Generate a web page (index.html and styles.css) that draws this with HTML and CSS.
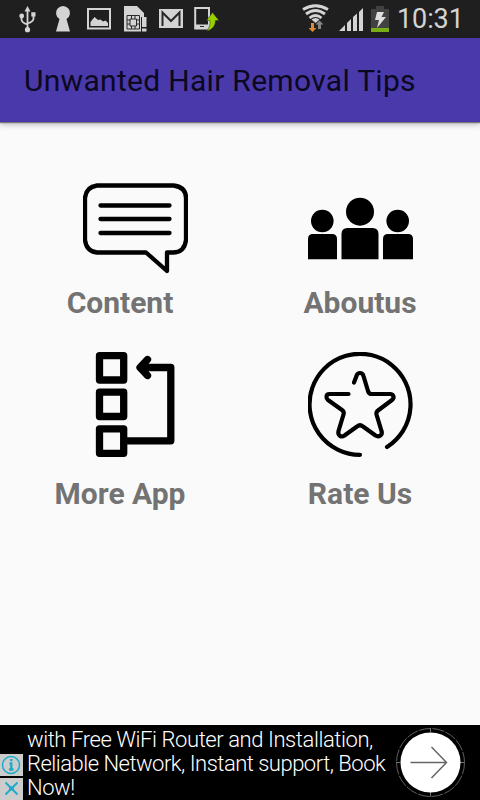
FILE: index.html
```html
<!DOCTYPE html>
<html lang="en">
<head>
<meta charset="utf-8">
<title>Unwanted Hair Removal Tips</title>
<link rel="stylesheet" href="styles.css">
</head>
<body>
<div class="screen">
  <div class="status">
    <svg class="status-left" viewBox="0 0 240 38" width="240" height="38" fill="none" stroke="#d4d4d4">
      <!-- usb -->
      <path d="M27.500 10V29M21.500 17V19.500Q21.500 22.500 27.500 24.500M33.500 15V18.500Q33.500 21.500 27.500 23.500" stroke-width="1.800"/>
      <path d="M24.500 11.500L27.500 6L30.500 11.500ZM31.300 12.200H35.500V16.500H31.300Z" fill="#d4d4d4" stroke="none"/>
      <circle cx="21.700" cy="16" r="2.400" fill="#d4d4d4" stroke="none"/><circle cx="27.500" cy="29.700" r="2.600" fill="#d4d4d4" stroke="none"/>
      <!-- keyhole -->
      <path d="M59.500 19A7 7 0 1 1 66.500 19L70 31.500H56Z" fill="#d4d4d4" stroke="none"/>
      <!-- picture -->
      <path d="M88 9H110V28.500H88Z" stroke-width="2"/>
      <path d="M90.500 26V22L94.500 17L98 20L100.500 19.500L103 21.500L105.500 20.500L108 23V26Z" fill="#d4d4d4" stroke="none"/>
      <!-- sim card -->
      <path d="M124 6H137L144 13V17H141V31.500H124Z" fill="#d4d4d4" stroke="none"/>
      <path d="M127 15.500H139.500V29H127ZM130 19H136.500V26H130ZM127 20H130M127 24H130M136 20H139M136 24H139M131.500 15V19M135 15V19M131.500 26V29M135 26V29" stroke="#282828" stroke-width="1"/>
      <path d="M142 17H146.500V27H142ZM142 28.500H146.500V31.500H142Z" fill="#d4d4d4" stroke="none"/>
      <!-- mail -->
      <path d="M159 9H183V28H159Z" fill="#d4d4d4" stroke="none"/>
      <path d="M162.500 26V12.500L171 21L179.500 12.500V26" stroke="#282828" stroke-width="2"/>
      <!-- phone with arrow -->
      <path d="M195.200 8H209V28.500H195.200Z" stroke-width="2"/>
      <path d="M195 24.500H209V29H195Z" fill="#d4d4d4" stroke="none"/><path d="M200 26.500H204" stroke="#282828"/>
      <path d="M212.500 12.500L219 20.500H215.500Q215.500 29 206.500 31Q210.500 27 210 20.500H206.500Z" fill="#98cf00" stroke="#282828" stroke-width=".5"/>
    </svg>
    <div class="status-right">
      <svg viewBox="300 0 92 38" width="92" height="38" fill="none" stroke="#d4d4d4">
        <path d="M303 9.500Q315.500 2 328 9.500M306 14Q315.500 7 325 14M309.500 18Q315.500 13 321.500 18" stroke-width="2.800"/>
        <path d="M311.500 19.500Q315.500 16.500 319.500 19.500L315.500 23Z" fill="#d4d4d4" stroke="none"/>
        <path d="M311 23H314V28H316.500L312.500 32L308.500 28H311Z" fill="#dc8b32" stroke="none"/>
        <path d="M318 29V24.500H315.500L319.500 20.500L323.500 24.500H321V29Z" fill="#858585" stroke="none"/>
        <path d="M339 31L345 25V31ZM347 23L351 19V31H347ZM353 17L357 13.500V31H353ZM359 12L363 8V31H359Z" fill="#d4d4d4" stroke="none"/>
        <path d="M371 9H376V6H384V9H389V28H371Z" fill="#414141" stroke="none"/>
        <path d="M371 28H389V32H371Z" fill="#78ad17" stroke="none"/>
        <path d="M377 12H384L381.500 17H386L377 28L379 20H375Z" fill="#dedede" stroke="none"/>
      </svg>
      <span class="clock">10:31</span>
    </div>
  </div>
  <header class="toolbar"><h1>Unwanted Hair Removal Tips</h1></header>
  <main class="menu">
    <a class="item shifted">
      <svg viewBox="83 176 105 105" width="105" height="105" fill="none" stroke="#000" stroke-width="4.300" stroke-linecap="round" stroke-linejoin="round">
        <path d="M97 185.500H173.500Q186 187 186 198V240Q184.500 252.500 173 252.500H167V271L146 252.500H97Q86.500 251.500 85 240V198Q86 187 97 185.500Z"/>
        <path d="M100.500 205.500H169.500M100.500 219H169.500M100.500 233H169.500"/>
      </svg>
      <span class="label">Content</span>
    </a>
    <a class="item">
      <svg viewBox="308 176 105 105" width="105" height="105">
        <circle cx="322.300" cy="221" r="11.300"/><circle cx="360" cy="211.700" r="14"/><circle cx="397.700" cy="221" r="11.300"/>
        <path d="M308 259.300V239Q308 234 313 234H332Q337 234 337 239V259.300ZM341.500 259.300V234Q341.500 228 347.500 228H372.500Q378.500 228 378.500 234V259.300ZM383 259.300V239Q383 234 388 234H408Q413 234 413 239V259.300Z"/>
      </svg>
      <span class="label">Aboutus</span>
    </a>
    <a class="item shifted low">
      <svg viewBox="83 352 105 105" width="105" height="105" fill="none" stroke="#000" stroke-width="7.300" stroke-linejoin="round" stroke-linecap="round">
        <path d="M99.500 355.700H123.700V380H99.500ZM99.500 392.200H123.700V416.500H99.500ZM99.500 428.800H123.700V453.300H99.500Z"/>
        <path d="M125 440.800H170.800V367.500H141M147.500 359.500L140 367.500L147.500 375.500"/>
      </svg>
      <span class="label">More App</span>
    </a>
    <a class="item low">
      <svg viewBox="308 352 105 105" width="105" height="105" fill="none" stroke="#000" stroke-width="4.200" stroke-linecap="round" stroke-linejoin="round">
        <path d="M360 454.800A50.500 50.500 0 1 1 387 447"/>
        <path d="M348.500 394H329.500C325.500 394 326 398.500 328 400L342 410Q344.500 412 343.500 414.500L338.500 431C337.500 436 341.500 437.500 344.500 435.500L357 426.500Q360 424 363 426.500L375.500 435.500C379 437.500 383 435 381.500 431L376.500 414.500Q376 412 378 410.500L392 400C394.500 398 394 394 390 394H371.500Q369 394 368 391L363.500 376C362.500 372 357.500 372 356.500 376L354 382.500"/>
      </svg>
      <span class="label">Rate Us</span>
    </a>
  </main>
  <footer class="ad">
    <div class="ad-controls">
      <svg viewBox="0 0 23 22" width="23" height="22" fill="none" stroke="#1baac9"><circle cx="11" cy="11" r="8.500" stroke-width="1.500"/><path d="M11.300 5V7.300M9.500 9.500H11.300V15.500M9 15.500H13.500" stroke-width="2.300"/></svg>
      <svg viewBox="0 0 23 22" width="23" height="22" fill="none" stroke="#1baac9" stroke-width="1.800"><path d="M5.500 4.500L17.500 16.500M17.500 4.500L5.500 16.500"/><path d="M9 10.500H14" stroke-width="4"/></svg>
    </div>
    <p class="ad-text">with Free WiFi Router and Installation,<br><span class="tight">Reliable Network, Instant support, Book</span><br>Now!</p>
    <svg class="ad-go" viewBox="0 0 70 70" width="70" height="70" fill="none">
      <circle cx="35.500" cy="35.500" r="34" stroke="#777" stroke-width=".8" stroke-dasharray="12 1.500"/>
      <path d="M35.500 1V5M35.500 65V69.500M1 35.500H5M65 35.500H69.500" stroke="#777"/>
      <circle cx="35.500" cy="35.500" r="30" fill="#fff"/>
      <path d="M15.500 35.500H51M36.500 20L51.500 35.500L36.500 51" stroke="#666" stroke-width="1.500"/>
    </svg>
  </footer>
</div>
</body>
</html>
```

FILE: styles.css
```css
* { box-sizing: border-box; }
body { margin: 0; font-family: Roboto, "Liberation Sans", sans-serif; }
svg { display: block; flex: none; }
.screen { width: 480px; height: 800px; display: flex; flex-direction: column; background: #fafafa; overflow: hidden; }
.status { height: 38px; flex: none; display: flex; justify-content: space-between; background: #1f1f1f; }
.status-right { display: flex; width: 180px; }
.clock { margin-left: 5px; color: #d4d4d4; font-size: 27px; line-height: 39px; letter-spacing: -.1px; white-space: nowrap; }
.toolbar { height: 84px; flex: none; padding-left: 24px; background: #4a39ab; box-shadow: 0 1px 1px #777, 0 2px 6px rgba(0,0,0,.3); }
.toolbar h1 { margin: 0; color: #0b0820; font-size: 30px; font-weight: 400; line-height: 85px; letter-spacing: .3px; white-space: nowrap; }
.menu { flex: 1; display: grid; grid-template-columns: 240px 240px; grid-template-rows: 176px 176px; padding-top: 54px; }
.item { display: flex; flex-direction: column; align-items: center; }
.shifted svg { margin-left: 31px; }
.label { margin-top: 1px; font-size: 30px; font-weight: 700; line-height: 42px; color: #737373; white-space: nowrap; }
.low .label { margin-top: 16px; }
.ad { height: 75px; flex: none; display: flex; background: #000; color: #fff; }
.ad-controls { width: 23px; display: flex; flex-direction: column; gap: 2px; padding-top: 29px; }
.ad-controls svg { background: #ccc; }
.ad-text { margin: 3px 0 0 4px; width: 368px; font-size: 22px; font-weight: 300; line-height: 24px; letter-spacing: -.42px; white-space: nowrap; }
.tight { letter-spacing: -.5px; }
.ad-go { margin-top: 2px; }
```
